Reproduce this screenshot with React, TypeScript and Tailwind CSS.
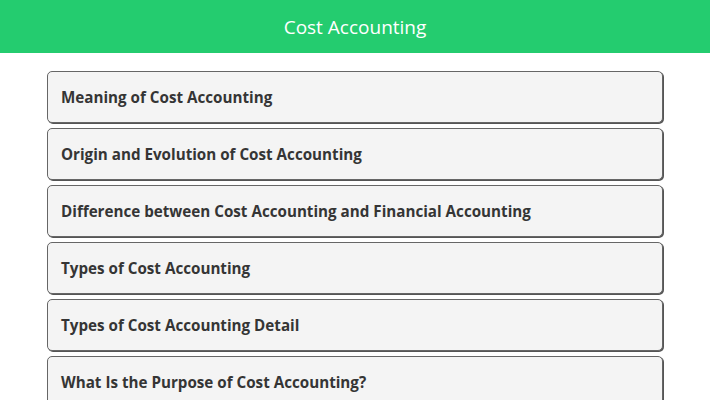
const topics = [
  "Meaning of Cost Accounting",
  "Origin and Evolution of Cost Accounting",
  "Difference between Cost Accounting and Financial Accounting",
  "Types of Cost Accounting",
  "Types of Cost Accounting Detail",
  "What Is the Purpose of Cost Accounting?",
];

export default function App() {
  return (
    <div className="h-[400px] overflow-hidden bg-white font-['Open_Sans',sans-serif]">
      <header className="flex h-[53px] items-center justify-center bg-[#24cc6f] pt-[2px]">
        <h1 className="text-[19px] font-normal text-white">Cost Accounting</h1>
      </header>

      <ul className="mx-[47px] mt-[18px] flex flex-col gap-[5px]">
        {topics.map((topic) => (
          <li
            key={topic}
            className="flex h-[52px] items-center rounded-[5px] border border-[#666] bg-[#f4f4f4] px-[13px] shadow-[1px_1px_0_#555]"
          >
            <span className="text-[15.2px] font-bold text-[#353535]">{topic}</span>
          </li>
        ))}
      </ul>
    </div>
  );
}
